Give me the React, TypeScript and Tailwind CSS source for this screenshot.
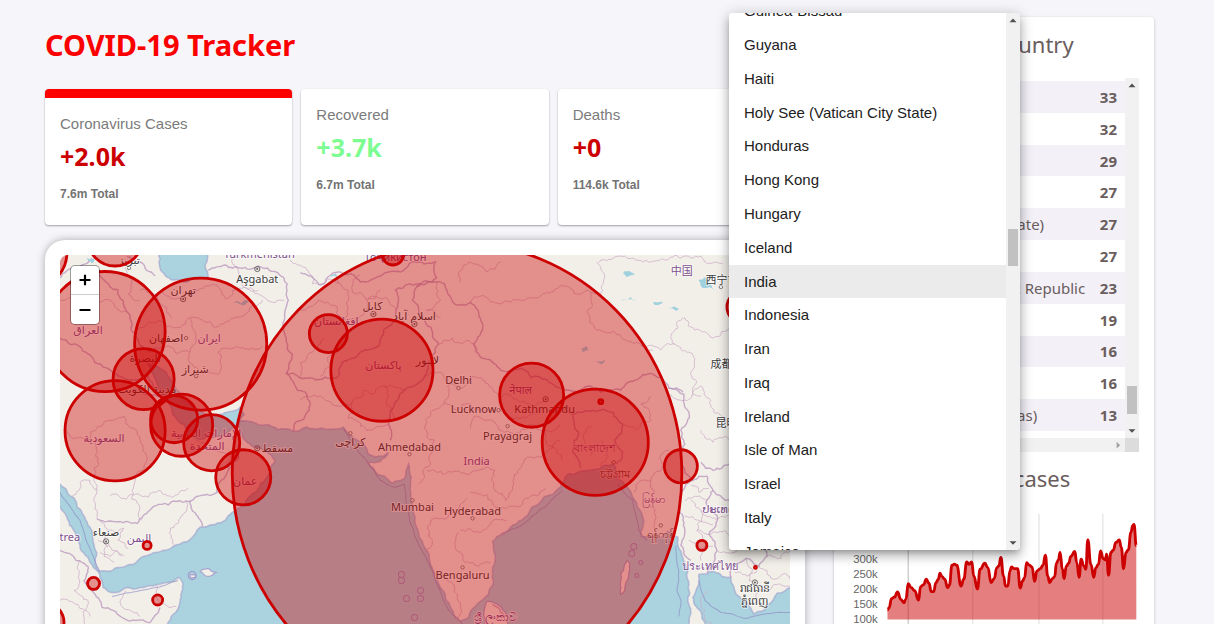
import React from "react";

type Pt = [number, number];

/* ---------- geometry helpers ---------- */

function parse(s: string): Pt[] {
  return s.trim().split(/\s+/).map((p) => p.split(",").map(Number) as Pt);
}

/* Breaks each segment into small uneven steps, as a coast or a border has. */
function rough(s: string, amp = 0.16, closed = false, min = 4): string {
  const pts = parse(s);
  let seed = Math.round(pts[0][0] * 31 + pts[0][1] * 17 + pts.length) % 9973;
  const rnd = () => {
    seed = (seed * 1103 + 12345) % 65537;
    return seed / 65537 - 0.5;
  };
  const out: Pt[] = [pts[0]];
  const split = (a: Pt, b: Pt) => {
    const dx = b[0] - a[0];
    const dy = b[1] - a[1];
    if (Math.hypot(dx, dy) < min) {
      out.push(b);
      return;
    }
    const k = rnd() * 2 * amp;
    const m: Pt = [(a[0] + b[0]) / 2 - dy * k, (a[1] + b[1]) / 2 + dx * k];
    split(a, m);
    split(m, b);
  };
  for (let i = 1; i < pts.length; i++) split(pts[i - 1], pts[i]);
  if (closed) split(pts[pts.length - 1], pts[0]);
  return "M" + out.map((p) => p[0].toFixed(1) + "," + p[1].toFixed(1)).join("L") + (closed ? "Z" : "");
}

/* ---------- map data ---------- */

const SEAS = [
  "237,419 262,425 293,431 320,428 343,427 348,433 363,444 368,454 383,456 388,452 380,461 368,462 377,474 392,483 403,479 408,464 410,481 413,511 418,532 427,551 433,571 443,591 450,607 460,621 468,617 480,601 488,594 492,571 492,541 510,527 530,509 560,487 567,474 577,472 597,469 613,464 617,479 630,492 637,507 642,527 640,536 660,537 667,531 677,537 682,557 687,571 688,584 687,601 685,640 685,760 150,760 167,624 173,614 180,601 183,584 178,577 167,582 140,587 112,592 103,587 100,577 98,571 90,562 80,547 67,517 60,506 50,500 50,470 60,484 67,491 77,507 90,527 93,541 95,564 100,571 120,567 143,556 157,552 173,546 190,539 200,527 223,521 230,514 240,507 257,491 267,477 275,461 270,454 252,446 243,438",
  "705,640 705,624 700,611 692,597 698,584 698,574 713,571 730,577 733,587 743,601 753,614 767,604 790,587 800,584 800,760 705,760",
  "158,250 160,268 173,280 187,282 208,278 205,265 207,250",
  "148,364 160,368 173,385 182,399 194,408 207,415 227,412 240,407 244,414 238,424 228,432 214,437 200,439 188,436 184,424 176,418 168,402 158,386",
];

const LANDS = [
  "486,601 497,604 507,617 512,640 500,660 486,640 483,615",
  "200,571 208,568 216,572 208,576",
  "190,574 195,574 195,577 190,577",
  "626,560 629,563 628,575 624,590 620,594 620,580",
];

const SHELF = [
  "343,429 350,440 366,460 380,480 394,487 404,484 409,520 424,554 440,592 452,614 464,626",
  "500,534 520,526 545,506 562,490",
  "617,484 632,500 638,530 646,540",
  "675,545 678,570 676,590 680,600 678,616",
  "698,580 704,600 720,612 745,618 770,613 790,612",
  "60,492 80,520 90,548 100,571",
  "112,596 140,590 178,580",
];

const BORDERS = [
  "60,338 90,355 118,376 133,380",
  "95,271 104,280 118,290 127,312 131,330 143,347 150,352",
  "60,278 76,268 92,258",
  "127,256 140,262 155,276",
  "133,380 148,376 166,395 150,395 138,390",
  "208,270 225,265 240,268 258,266 276,272 287,284 288,300 284,320 286,340 292,354 286,373 297,390 305,392 309,410 294,424 293,431",
  "97,519 127,521 137,523 150,510 160,504 190,501 217,492 228,470 240,446",
  "190,500 202,526",
  "286,373 312,378 338,376 342,362 360,352 378,346 383,330 396,318 398,300 395,290 410,284 436,282 444,284 450,297 457,305 470,302 478,312 482,330 473,344 476,352 490,360 500,370 520,368 545,379 560,388 576,392",
  "300,273 320,285 338,272 360,282 380,276 400,272 420,262 435,262 436,278 416,286",
  "420,284 412,300 418,310 425,322 432,334 438,344 430,360 424,376 404,390 390,410 388,424 390,440",
  "576,392 590,386 600,392 620,390 634,380 652,374 668,388 682,392",
  "668,388 683,394 688,412 680,430 684,444 680,462 692,480 680,492 678,510 684,530 680,545 690,560",
  "560,410 572,414 578,432 572,450 580,468",
  "572,414 592,410 612,412 622,424 614,440 622,452 616,464",
  "692,480 706,476 712,490 724,500 740,498 760,540 766,556 758,566 745,558 730,566 730,577",
  "60,550 76,560 88,566 84,580 92,590 98,589",
  "92,590 102,607 122,617 150,622 160,607",
  "492,604 500,612 507,617",
  "700,462 712,470 728,464 742,470 760,460 790,470",
  "706,572 716,550 708,534 716,515 706,500 712,490",
];

const ADMIN = [
  "60,300 90,296 110,300 127,312",
  "80,275 84,290 96,296",
  "150,352 168,346 190,352 200,372 218,374 218,352 236,346 262,346",
  "136,330 150,322 166,326 190,318 240,317 262,300",
  "190,318 196,340 190,352",
  "140,290 158,300 172,318",
  "160,290 180,298 206,286 228,298 258,290",
  "120,264 132,278 128,294 140,300",
  "66,430 90,440 110,420 124,416 140,440 146,462 142,520",
  "90,440 98,462 97,519",
  "72,496 80,482 90,480 98,490",
  "110,496 142,496 188,488",
  "196,440 232,458 228,470",
  "186,502 180,518 170,528 176,546",
  "232,258 238,280 262,296 284,300",
  "290,260 312,284 340,284 336,272",
  "300,310 318,300 336,306 346,320 360,316 372,296 388,300 396,310",
  "340,284 348,300 344,318",
  "300,378 312,352 324,338",
  "320,376 330,350",
  "360,275 352,292 366,300 380,290",
  "300,400 320,396 352,402 364,390 384,386 404,390",
  "352,402 348,418 360,426 388,424",
  "384,386 386,404 398,420",
  "436,282 440,300 426,310 440,318",
  "438,344 452,338 470,342 474,352",
  "424,376 440,372 448,384 462,388 470,378 488,384 500,396 520,402 545,400",
  "448,384 444,402 456,410 470,404 484,412 500,410 520,418 540,414",
  "444,402 430,412 424,428 434,440 430,454 424,468 418,484",
  "470,428 474,416 490,420 500,430 514,434 530,424 545,430 560,424",
  "426,470 444,474 460,472 478,470 494,470 494,490 505,500 512,488 514,474 530,456 548,450 560,440",
  "470,492 486,494 492,502 500,508 512,506 530,496 545,488",
  "428,536 430,522 446,518 458,508 466,498",
  "460,530 478,532 490,524 506,520",
  "426,552 432,540 428,534",
  "458,532 456,550 464,562 478,566 490,562",
  "446,580 454,586 460,604 458,618",
  "545,430 550,446 562,460",
  "600,440 606,452 600,466",
  "590,456 584,440 592,426",
  "500,304 520,300 546,292 570,288 590,292 596,330 620,336 640,345 652,350",
  "470,302 480,296 490,302 500,304",
  "596,262 604,278 600,295 590,292",
  "598,262 620,256 650,262 680,258 700,256 722,264",
  "640,345 660,350 674,344 676,322 684,318 694,330 712,338 730,326",
  "674,344 688,352 690,372 692,394 700,386 710,400 724,420 740,440",
  "670,394 684,400 700,396",
  "622,424 636,430 650,420 640,404 650,396",
  "650,480 648,500 654,520 650,536",
  "634,492 640,480 650,480 660,470 668,450",
  "700,510 720,516 738,510",
  "696,530 708,534 724,530 738,540",
  "690,500 700,510 696,530 706,545 700,560",
  "684,500 696,496 706,500",
  "684,516 698,520 712,524",
  "688,540 698,548 712,546",
  "690,484 698,492 708,488",
  "716,550 734,552 750,540",
  "758,566 770,578 786,574 790,580",
  "745,558 748,580 760,590 756,604",
  "766,556 780,558 790,550",
  "734,572 746,576 756,570",
  "768,590 776,584 790,586",
  "700,430 712,442 724,436 740,450",
  "706,590 700,606 712,624",
  "80,560 74,590 88,600 84,624",
  "126,590 124,608 140,616",
  "157,585 158,600 176,606",
  "100,520 108,530 124,528 118,540 128,548",
  "98,540 108,546 104,556 114,562",
  "108,530 104,540 112,550 122,556",
  "100,552 110,556 116,550 124,556",
  "60,600 78,604 90,616",
  "460,282 468,262 486,272 500,262",
];

const LAKES = [
  "622,273 630,272 634,275 626,277",
  "698,280 704,277 707,283 713,290 706,288 700,286",
  "668,308 680,308 676,311",
  "620,300 630,297 636,301",
  "580,348 586,346 588,350 582,352",
  "596,361 604,360 600,364",
  "652,303 662,302 656,305",
  "86,258 94,258 93,263 88,261",
  "328,276 336,274 338,278",
  "232,302 250,300 240,304",
];

const ISLETS: [number, number, number][] = [
  [401, 574, 3], [401, 580, 3], [420, 590, 3], [406, 598, 3], [420, 598, 3], [414, 617, 3],
  [633, 546, 3], [631, 553, 3], [640, 562, 2], [636, 575, 2], [192, 575, 4],
];

interface Bubble { x: number; y: number; rx: number; ry?: number }

const BUBBLES: Bubble[] = [
  { x: 456.5, y: 473.5, rx: 224.5, ry: 231 },
  { x: 105, y: 331.5, rx: 60 },
  { x: 200.5, y: 344, rx: 66 },
  { x: 115, y: 238.5, rx: 27.5 },
  { x: 30, y: 252, rx: 37 },
  { x: 143.5, y: 379, rx: 30.5 },
  { x: 115, y: 430.5, rx: 50 },
  { x: 174, y: 419, rx: 23.5 },
  { x: 181.5, y: 425, rx: 31 },
  { x: 211.5, y: 442.5, rx: 28 },
  { x: 243, y: 477, rx: 27.5 },
  { x: 328, y: 333.5, rx: 19 },
  { x: 381.5, y: 370, rx: 51 },
  { x: 392.5, y: 254.5, rx: 10.5 },
  { x: 531, y: 395, rx: 32 },
  { x: 594.5, y: 442, rx: 53 },
  { x: 680, y: 466, rx: 16.5 },
  { x: 742, y: 307, rx: 16 },
  { x: 600, y: 401.5, rx: 2 },
  { x: 701, y: 545, rx: 5 },
  { x: 754.5, y: 567, rx: 1 },
  { x: 147, y: 545, rx: 4 },
  { x: 93.5, y: 583, rx: 6 },
  { x: 157.5, y: 599.5, rx: 5 },
  { x: 44, y: 622, rx: 20 },
];

interface Label { x: number; y: number; t: string; country?: boolean }

const LABELS: Label[] = [
  { x: 259, y: 258, t: "Türkmenistan", country: true },
  { x: 395, y: 261, t: "Тоҷикистон", country: true },
  { x: 257, y: 283, t: "Aşgabat" },
  { x: 129, y: 264, t: "تبریز" },
  { x: 183, y: 294, t: "تهران" },
  { x: 88, y: 334, t: "العراق", country: true },
  { x: 166, y: 342, t: "اصفهان" },
  { x: 209, y: 342, t: "ایران", country: true },
  { x: 145, y: 362, t: "البصرة" },
  { x: 195, y: 373, t: "شیراز" },
  { x: 147, y: 393, t: "مدينة الكويت" },
  { x: 104, y: 442, t: "السعودية", country: true },
  { x: 206, y: 437, t: "الإمارات العربية", country: true },
  { x: 207, y: 450, t: "المتحدة", country: true },
  { x: 277, y: 452, t: "مسقط" },
  { x: 245, y: 485, t: "عمان", country: true },
  { x: 106, y: 536, t: "صنعاء" },
  { x: 139, y: 542, t: "اليمن", country: true },
  { x: 63, y: 541, t: "Eritrea", country: true },
  { x: 372, y: 310, t: "کابل" },
  { x: 336, y: 325, t: "افغانستان", country: true },
  { x: 414, y: 320, t: "اسلام آباد" },
  { x: 383, y: 369, t: "پاکستان", country: true },
  { x: 427, y: 364, t: "لاہور" },
  { x: 350, y: 446, t: "کراچی" },
  { x: 458, y: 384, t: "Delhi" },
  { x: 473, y: 413, t: "Lucknow" },
  { x: 507, y: 440, t: "Prayagraj" },
  { x: 409, y: 451, t: "Ahmedabad" },
  { x: 476, y: 465, t: "India", country: true },
  { x: 412, y: 511, t: "Mumbai" },
  { x: 472, y: 515, t: "Hyderabad" },
  { x: 462, y: 579, t: "Bengaluru" },
  { x: 495, y: 621, t: "ශ්‍රී ලංකාව", country: true },
  { x: 520, y: 394, t: "नेपाल", country: true },
  { x: 544, y: 413, t: "Kathmandu" },
  { x: 594, y: 452, t: "বাংলাদেশ", country: true },
  { x: 614, y: 478, t: "চট্টগ্রাম" },
  { x: 653, y: 503, t: "မြန်မာ", country: true },
  { x: 660, y: 538, t: "ရန်ကုန်" },
  { x: 681, y: 275, t: "中国", country: true },
  { x: 721, y: 284, t: "西宁市" },
  { x: 726, y: 368, t: "成都市" },
  { x: 731, y: 427, t: "昆明市" },
  { x: 728, y: 513, t: "ປະເທດລາວ", country: true },
  { x: 709, y: 570, t: "ประเทศไทย", country: true },
  { x: 754, y: 592, t: "រាជធានី" },
  { x: 754, y: 605, t: "ភ្នំពេញ" },
];

const TOWNS: [number, number, boolean][] = [
  [257, 269, true], [183, 299, true], [373, 314, true], [414, 324, true], [545, 399, true],
  [257, 448, true], [106, 541, true], [754, 582, true], [129, 268, false], [186, 338, false],
  [196, 376, false], [458, 388, false], [498, 410, false], [507, 426, false], [409, 454, false],
  [412, 500, false], [472, 518, false], [462, 567, false], [350, 433, false], [720, 287, false],
  [660, 525, false], [613, 462, false],
];

function CasesMap() {
  return (
    <svg
      className="block h-[480px] w-full rounded-tl-lg"
      viewBox="60 255 729 480"
      preserveAspectRatio="xMinYMin slice"
      role="img"
      aria-label="Map of cases by country"
    >
      <rect x="0" y="200" width="1400" height="600" fill="#f2efe9" />
      {SEAS.map((s) => {
        const d = rough(s, 0.13, true);
        return (
          <g key={s}>
            <path d={d} fill="#aad3df" />
            <path d={d} fill="none" stroke="#a3a8cf" strokeWidth="1.6" strokeOpacity="0.7" />
          </g>
        );
      })}
      {LANDS.map((s) => (
        <path key={s} d={rough(s, 0.14, true)} fill="#f2efe9" stroke="#a9a4cf" strokeWidth="1.2" />
      ))}
      {SHELF.map((s) => (
        <path key={s} d={rough(s, 0.05)} fill="none" stroke="#8f8fc4" strokeWidth="1" strokeOpacity="0.7" />
      ))}
      {ADMIN.map((s) => (
        <path key={s} d={rough(s, 0.24, false, 3)} fill="none" stroke="#cbaac6" strokeWidth="0.9" strokeOpacity="0.8" />
      ))}
      {BORDERS.map((s) => (
        <path key={s} d={rough(s, 0.16, false, 3)} fill="none" stroke="#b894bc" strokeWidth="1.4" strokeOpacity="0.75" />
      ))}
      {LAKES.map((s) => (
        <path key={s} d={rough(s, 0.2, true, 2)} fill="#9fd0de" />
      ))}
      {ISLETS.map(([x, y, r]) => (
        <circle key={x + "-" + y} cx={x} cy={y} r={r} fill="none" stroke="#9d95c9" strokeWidth="1" />
      ))}
      {TOWNS.map(([x, y, capital]) =>
        capital ? (
          <g key={x + "-" + y}>
            <circle cx={x} cy={y} r="2.6" fill="none" stroke="#5c5c5c" strokeWidth="0.9" />
            <circle cx={x} cy={y} r="1" fill="#5c5c5c" />
          </g>
        ) : (
          <circle key={x + "-" + y} cx={x} cy={y} r="1.7" fill="#f7f5f1" stroke="#6d6d6d" strokeWidth="0.8" />
        ),
      )}
      <g
        textAnchor="middle"
        fontSize="11"
        stroke="#ffffff"
        strokeOpacity="0.6"
        strokeWidth="2"
        strokeLinejoin="round"
        paintOrder="stroke"
        className="font-['Noto_Sans','DejaVu_Sans','Noto_Sans_CJK_SC',sans-serif]"
      >
        {LABELS.map((l) => (
          <text key={l.t} x={l.x} y={l.y} fill={l.country ? "#80508f" : "#3c3c3c"}>
            {l.t}
          </text>
        ))}
      </g>
      {BUBBLES.map((b) => (
        <ellipse
          key={b.x + "-" + b.y}
          cx={b.x}
          cy={b.y}
          rx={b.rx}
          ry={b.ry ?? b.rx}
          fill="#cc0000"
          fillOpacity="0.4"
          stroke="#cc0000"
          strokeWidth="2.8"
        />
      ))}
    </svg>
  );
}

/* ---------- stat cards ---------- */

interface Stat { label: string; value: string; total: string; color: string; active?: boolean }

const STATS: Stat[] = [
  { label: "Coronavirus Cases", value: "+2.0k", total: "7.6m Total", color: "text-[#cc0000]", active: true },
  { label: "Recovered", value: "+3.7k", total: "6.7m Total", color: "text-[#7cfc91]" },
  { label: "Deaths", value: "+0", total: "114.6k Total", color: "text-[#cc0000]" },
];

function StatCard({ label, value, total, color, active }: Stat) {
  return (
    <button
      type="button"
      className={
        "flex h-34 flex-1 flex-col items-start rounded bg-white px-[15px] pt-4 text-left shadow-[0_1px_2px_rgba(0,0,0,0.35)] " +
        (active ? "border-t-[9px] border-[#ff0000]" : "")
      }
    >
      <span className="text-[15px] leading-5 text-[#7b7b7b]">{label}</span>
      <span className={"mt-1.5 font-['Noto_Sans',sans-serif] text-[25px] leading-8 font-bold " + color}>{value}</span>
      <span className="mt-3 text-xs leading-5 font-bold text-[#737373]">{total}</span>
    </button>
  );
}

/* ---------- scroll bar ---------- */

function Arrow({ d, className }: { d: string; className?: string }) {
  return (
    <svg viewBox="0 0 14 14" className={"size-3.5 shrink-0 " + (className ?? "text-[#505050]")} aria-hidden="true">
      <path d={d} fill="currentColor" />
    </svg>
  );
}

const UP = "M3.5 9.2 7 5.6l3.5 3.6z";
const DOWN = "M3.5 5.2 7 8.8l3.5-3.6z";
const RIGHT = "M5.6 3.8 9.2 7.2 5.6 10.6z";

/* ---------- live cases ---------- */

const ROWS: [string, number][] = [
  ["Grenada", 33],
  ["Saint Lucia", 32],
  ["Timor-Leste", 29],
  ["New Caledonia", 27],
  ["Holy See (Vatican City State)", 27],
  ["Dominica", 27],
  ["Lao People's Democratic Republic", 23],
  ["Fiji", 19],
  ["Greenland", 16],
  ["Montserrat", 16],
  ["Falkland Islands (Malvinas)", 13],
];

function LiveCases() {
  return (
    <div className="grid grid-cols-[1fr_14px] grid-rows-[360px_14px]">
      <div className="overflow-hidden pt-[3px]">
        <table className="h-[350px] w-full border-collapse text-[15px] leading-5 text-[#6a5d5d]">
          <tbody>
            {ROWS.map(([name, cases]) => (
              <tr key={name} className="odd:bg-[#f3f0f8]">
                <td className="p-0 whitespace-nowrap">{name}</td>
                <td className="py-0 pr-2 pl-0 text-right font-bold">{cases}</td>
              </tr>
            ))}
          </tbody>
        </table>
      </div>
      <div className="flex flex-col items-center bg-[#f1f1f1]">
        <Arrow d={UP} />
        <span className="flex-1" />
        <span className="mb-2.5 h-7 w-2.5 bg-[#c1c1c1]" />
        <Arrow d={DOWN} />
      </div>
      <div className="flex justify-end bg-[#f1f1f1]">
        <Arrow d={RIGHT} className="text-[#a3a3a3]" />
      </div>
      <div className="bg-[#dcdcdc]" />
    </div>
  );
}

/* ---------- new cases chart ---------- */

const SERIES =
  "175,332 180,325 187,298 196,293 205,278 215,300 224,310 230,300 237,253 246,265 256,274 268,302 274,262 283,256 291,240 299,252 306,277 313,277 320,250 327,240 332,222 338,232 346,240 355,265 360,258 368,198 375,195 382,198 395,260 403,240 412,188 419,195 427,188 433,230 444,269 452,210 466,192 475,205 485,250 494,238 502,205 508,200 514,175 522,230 528,260 535,260 541,215 546,203 553,208 564,208 572,266 579,245 585,235 591,190 598,197 607,203 615,246 622,215 632,208 640,198 647,168 654,230 660,250 668,238 675,232 680,192 686,182 691,160 698,210 703,238 710,200 717,192 723,172 735,157 741,190 748,234 754,180 762,200 768,210 774,122 783,195 792,234 798,205 806,195 812,155 820,178 827,182 830,165 836,228 843,160 850,153 858,130 868,122 874,145 881,208 888,160 895,152 903,100 908,80 912,76 919,140";

const TICKS = ["450k", "400k", "350k", "300k", "250k", "200k", "150k", "100k", "50k", "0"];

function smooth(pts: Pt[]): string {
  let d = `M${pts[0][0]},${pts[0][1]}`;
  for (let i = 1; i < pts.length; i++) {
    const [x0, y0] = pts[i - 1];
    const [x1, y1] = pts[i];
    const mid = (x0 + x1) / 2;
    d += `C${mid},${y0} ${mid},${y1} ${x1},${y1}`;
  }
  return d;
}

function CasesChart() {
  const line = smooth(parse(SERIES));
  return (
    <svg viewBox="60 0 867 480" className="block w-full" role="img" aria-label="New cases over time">
      {[237, 430, 628, 819].map((x, i) => (
        <path key={x} d={`M${x} 44V400`} stroke={i === 0 ? "#c4c4c4" : "#e2e2e2"} strokeWidth="3.5" />
      ))}
      <path d={line + "V360H175Z"} fill="#cc0000" fillOpacity="0.5" />
      <path d={line} fill="none" stroke="#cc0000" strokeWidth="8.5" strokeLinejoin="round" />
      <g fontSize="34" fill="#666666" textAnchor="end">
        {TICKS.map((t, i) => (
          <text key={t} x="146" y={55 + i * 45}>
            {t}
          </text>
        ))}
      </g>
    </svg>
  );
}

/* ---------- country menu ---------- */

const COUNTRIES = [
  "Guinea-Bissau", "Guyana", "Haiti", "Holy See (Vatican City State)", "Honduras", "Hong Kong",
  "Hungary", "Iceland", "India", "Indonesia", "Iran", "Iraq", "Ireland", "Isle of Man", "Israel",
  "Italy", "Jamaica",
];

function CountryMenu() {
  const [picked, setPicked] = React.useState("India");
  return (
    <div className="absolute top-[13px] left-[729px] z-10 flex h-[537px] w-[291px] items-center overflow-hidden rounded bg-white shadow-[0_4px_5px_-2px_rgba(0,0,0,0.2),0_7px_10px_1px_rgba(0,0,0,0.14),0_2px_14px_1px_rgba(0,0,0,0.2)]">
      <div role="listbox" aria-label="Country" className="flex h-[574px] flex-1 flex-col">
        {COUNTRIES.map((name) => (
          <button
            key={name}
            type="button"
            role="option"
            aria-selected={name === picked}
            onClick={() => setPicked(name)}
            className={
              "flex-1 px-[15px] text-left text-[15px] leading-6 text-[#212121] " +
              (name === picked ? "bg-[#ebebeb]" : "bg-white")
            }
          >
            {name}
          </button>
        ))}
      </div>
      <div className="flex h-[537px] w-3.5 flex-col items-center bg-[#f1f1f1]">
        <Arrow d={UP} />
        <span className="mt-[202px] h-[37px] w-2.5 bg-[#c1c1c1]" />
        <span className="flex-1" />
        <Arrow d={DOWN} />
      </div>
    </div>
  );
}

/* ---------- page ---------- */

export default function App() {
  return (
    <div className="relative flex h-screen gap-[29px] overflow-hidden bg-[#f5f5fa] pr-15 pl-[45px] font-['Liberation_Sans',Arial,sans-serif]">
      <main className="min-w-0 flex-1">
        <header className="flex h-[89px] items-center">
          <h1 className="font-['Noto_Sans',sans-serif] text-[29px] leading-10 font-bold text-[#fc0000]">
            COVID-19 Tracker
          </h1>
        </header>
        <div className="flex gap-[9px]">
          {STATS.map((s) => (
            <StatCard key={s.label} {...s} />
          ))}
        </div>
        <section className="relative mt-[15px] rounded-[20px] bg-white p-[15px] shadow-[0_0_8px_rgba(0,0,0,0.3)]">
          <CasesMap />
          <div className="absolute top-[26px] left-[26px] flex w-7 flex-col overflow-hidden rounded-sm bg-white shadow-[0_0_0_1px_rgba(0,0,0,0.35)]">
            <button type="button" aria-label="Zoom in" className="flex h-[29px] items-center justify-center border-b border-[#cccccc]">
              <svg viewBox="0 0 12 12" className="size-3" aria-hidden="true">
                <path d="M6 0.8v10.4M0.5 6h11" stroke="#000" strokeWidth="2.2" />
              </svg>
            </button>
            <button type="button" aria-label="Zoom out" className="flex h-[29px] items-center justify-center">
              <svg viewBox="0 0 12 12" className="size-3" aria-hidden="true">
                <path d="M0.5 6h11" stroke="#000" strokeWidth="2.2" />
              </svg>
            </button>
          </div>
        </section>
      </main>

      <aside className="mt-[17px] h-[700px] w-80 shrink-0 rounded bg-white px-[15px] pt-[11px] font-['Noto_Sans',sans-serif] text-[#6a5d5d] shadow-[0_1px_3px_rgba(0,0,0,0.25)]">
        <h2 className="mb-[18px] text-[22px] leading-8">Live Cases by Country</h2>
        <LiveCases />
        <h2 className="mt-2.5 mb-[5px] text-[22px] leading-8">Worldwide new cases</h2>
        <div className="font-['Liberation_Sans',Arial,sans-serif]">
          <CasesChart />
        </div>
      </aside>

      <CountryMenu />
    </div>
  );
}
